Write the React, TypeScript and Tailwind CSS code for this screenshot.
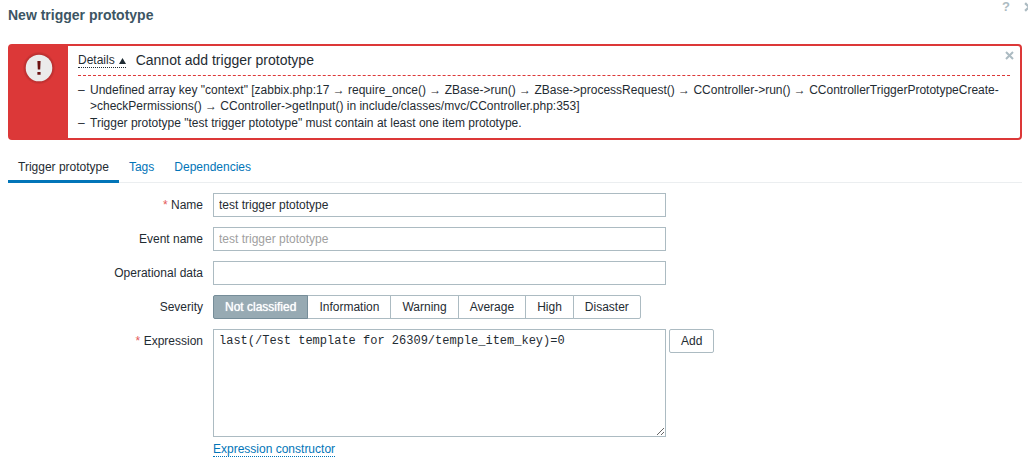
import { useState } from "react";
import type { ReactNode } from "react";

const severities = ["Not classified", "Information", "Warning", "Average", "High", "Disaster"];
const tabs = ["Trigger prototype", "Tags", "Dependencies"];
const messages = [
  'Undefined array key "context" [zabbix.php:17 → require_once() → ZBase->run() → ZBase->processRequest() → CController->run() → CControllerTriggerPrototypeCreate->checkPermissions() → CController->getInput() in include/classes/mvc/CController.php:353]',
  'Trigger prototype "test trigger ptototype" must contain at least one item prototype.',
];

const fieldClass =
  "h-6 w-full border border-[#acbbc2] bg-white px-[5px] text-[#1f2c33] placeholder:text-[#9f9f9f] outline-none focus:border-[#0275b8]";

function CrossIcon({ size = 9 }: { size?: number }) {
  return (
    <svg width={size} height={size} viewBox="0 0 9 9" fill="none" stroke="#acbbc2" strokeWidth="2" aria-hidden="true">
      <path d="M1 1 8 8M8 1 1 8" />
    </svg>
  );
}

function ErrorIcon() {
  return (
    <svg width="34" height="34" viewBox="0 0 34 34" className="block" aria-hidden="true">
      <defs>
        <radialGradient id="error-shade">
          <stop offset="0.76" stopColor="#8c2020" stopOpacity="0.6" />
          <stop offset="1" stopColor="#8c2020" stopOpacity="0" />
        </radialGradient>
      </defs>
      <circle cx="17" cy="17" r="16.5" fill="url(#error-shade)" />
      <circle cx="17" cy="17" r="13.3" fill="#ebebeb" />
      <path d="M15.4 10h3.2l-.4 8.6h-2.4zM15.4 21h3.2v2.8h-3.2z" fill="#6b1212" />
    </svg>
  );
}

function Row({ id, label, required, children }: { id?: string; label: string; required?: boolean; children: ReactNode }) {
  return (
    <div className="flex items-start gap-2.5">
      <label htmlFor={id} id={id ? undefined : "severity-label"} className="w-[195px] shrink-0 text-right leading-6">
        {required && <span className="text-[#e45959]">* </span>}
        {label}
      </label>
      <div className="min-w-0 flex-1">{children}</div>
    </div>
  );
}

export default function App() {
  const [tab, setTab] = useState(tabs[0]);
  const [severity, setSeverity] = useState(severities[0]);
  const [open, setOpen] = useState(true);

  return (
    <main className="overflow-hidden bg-white pb-2 pl-2 font-['Liberation_Sans',Arial,sans-serif] text-xs text-[#1f2c33]">
      <header className="flex h-11 items-start justify-between">
        <h1 className="pt-[5px] text-sm leading-5 font-bold text-[#3c5563]">New trigger prototype</h1>
        <div className="-mr-1.5 flex h-3.5 items-center gap-3.5">
          <a href="#help" aria-label="Help" className="text-[13px] leading-3.5 font-bold text-[#acbbc2]">?</a>
          <button type="button" aria-label="Close"><CrossIcon size={10} /></button>
        </div>
      </header>

      <section className="mr-1.5 flex rounded-[4px] border-2 border-[#dc3838] bg-[#dc3838]">
        <div className="flex w-[58px] shrink-0 justify-center pt-[5px]"><ErrorIcon /></div>
        <div className="relative min-w-0 flex-1 rounded-r-[2px] bg-white px-2.5 pt-1.5 pb-[7px]">
          <div className="flex h-6 items-start gap-2.5 border-b border-dashed border-[#dc3838]">
            <button
              type="button"
              aria-expanded={open}
              onClick={() => setOpen(!open)}
              className="flex items-center gap-1 border-b border-dotted border-[#1f2c33] pt-px leading-3.5"
            >
              Details
              <svg width="7" height="6" viewBox="0 0 7 6" className="mt-0.5" aria-hidden="true">
                <path d="M3.5 0 7 6H0z" fill="#1f2c33" />
              </svg>
            </button>
            <span className="text-sm leading-4">Cannot add trigger prototype</span>
          </div>
          {open && (
            <ul className="flex flex-col gap-px pt-1.5 leading-4">
              {messages.map((message) => (
                <li key={message} className="flex">
                  <span className="w-3 shrink-0">–</span>
                  <span className="min-w-0">{message}</span>
                </li>
              ))}
            </ul>
          )}
          <button type="button" aria-label="Close message" className="absolute top-[5px] right-1.5"><CrossIcon /></button>
        </div>
      </section>

      <nav role="tablist" className="mt-2.5 mr-1.5 flex h-[33px] shadow-[inset_0_-1px_0_#ebeef0]">
        {tabs.map((name) => (
          <button
            key={name}
            type="button"
            role="tab"
            aria-selected={tab === name}
            onClick={() => setTab(name)}
            className={`border-b-3 px-2.5 pt-1 ${tab === name ? "border-[#0275b8]" : "border-transparent text-[#0275b8]"}`}
          >
            {name}
          </button>
        ))}
      </nav>

      <form className="flex flex-col gap-2.5 pt-2.5" onSubmit={(e) => e.preventDefault()}>
        <Row id="name" label="Name" required>
          <div className="max-w-[453px]"><input id="name" type="text" defaultValue="test trigger ptototype" className={fieldClass} /></div>
        </Row>
        <Row id="event-name" label="Event name">
          <div className="max-w-[453px]"><input id="event-name" type="text" placeholder="test trigger ptototype" className={fieldClass} /></div>
        </Row>
        <Row id="opdata" label="Operational data">
          <div className="max-w-[453px]"><input id="opdata" type="text" className={fieldClass} /></div>
        </Row>
        <Row label="Severity">
          <div role="radiogroup" aria-labelledby="severity-label" className="flex">
            {severities.map((name) => (
              <label
                key={name}
                className={`relative -mr-px h-6 border px-[11px] leading-[22px] first:rounded-l-[2px] last:rounded-r-[2px] ${
                  severity === name
                    ? "z-10 border-[#768d99] bg-[#97aab3] text-white [text-shadow:0_0_1px_#ffffff]"
                    : "border-[#acbbc2] bg-white"
                }`}
              >
                <input
                  type="radio"
                  name="severity"
                  value={name}
                  checked={severity === name}
                  onChange={() => setSeverity(name)}
                  className="sr-only"
                />
                {name}
              </label>
            ))}
          </div>
        </Row>
        <Row id="expression" label="Expression" required>
          <div className="flex items-start gap-[3px]">
            <textarea
              id="expression"
              spellCheck={false}
              defaultValue="last(/Test template for 26309/temple_item_key)=0"
              className="block h-27 w-full max-w-[453px] resize border border-[#acbbc2] px-[5px] py-1 font-['Liberation_Mono','Courier_New',monospace] leading-3.5 outline-none focus:border-[#0275b8]"
            />
            <button type="button" className="h-6 shrink-0 rounded-[2px] border border-[#acbbc2] px-[11px]">Add</button>
          </div>
          <a href="#constructor" className="mt-1 inline-block border-b border-dotted border-[#0275b8] pt-px leading-3.5 text-[#0275b8]">
            Expression constructor
          </a>
        </Row>
      </form>
    </main>
  );
}
